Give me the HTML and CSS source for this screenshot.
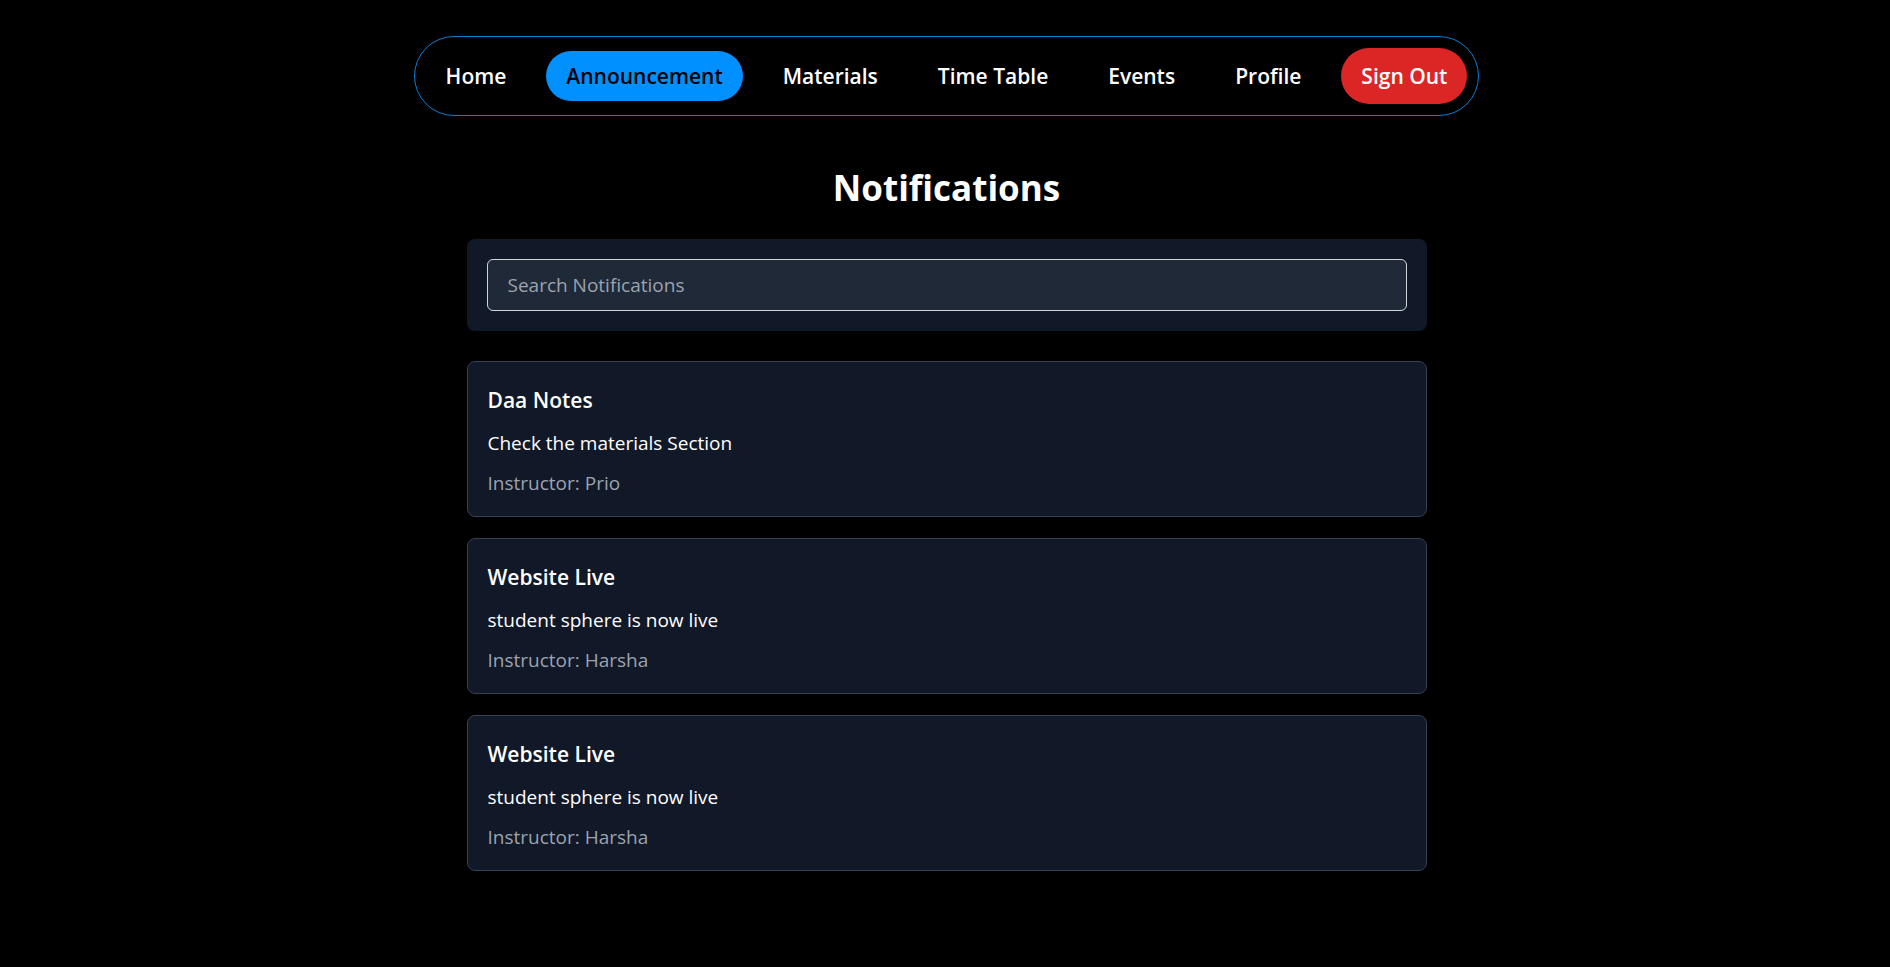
FILE: index.html
```html
<!DOCTYPE html>
<html lang="en">
<head>
<meta charset="utf-8">
<title>Notifications</title>
<link rel="stylesheet" href="styles.css">
</head>
<body>
<div class="page">
  <nav class="nav">
    <a class="nav-item">Home</a>
    <a class="nav-item active">Announcement</a>
    <a class="nav-item">Materials</a>
    <a class="nav-item">Time Table</a>
    <a class="nav-item">Events</a>
    <a class="nav-item">Profile</a>
    <a class="nav-item signout">Sign Out</a>
  </nav>
  <main class="content">
    <h1 class="title">Notifications</h1>
    <div class="search-box">
      <input class="search-input" type="text" placeholder="Search Notifications">
    </div>
    <div class="card">
      <h3 class="card-title">Daa Notes</h3>
      <p class="card-text">Check the materials Section</p>
      <p class="card-meta">Instructor: Prio</p>
    </div>
    <div class="card">
      <h3 class="card-title">Website Live</h3>
      <p class="card-text">student sphere is now live</p>
      <p class="card-meta">Instructor: Harsha</p>
    </div>
    <div class="card">
      <h3 class="card-title">Website Live</h3>
      <p class="card-text">student sphere is now live</p>
      <p class="card-meta">Instructor: Harsha</p>
    </div>
  </main>
</div>
</body>
</html>
```
FILE: styles.css
```css
* { box-sizing: border-box; }
html, body {
  margin: 0;
  padding: 0;
  background: #000;
  color: #fff;
  font-family: "Open Sans", "Noto Sans", sans-serif;
}
.page {
  display: flex;
  flex-direction: column;
  align-items: center;
  padding-top: 36px;
  padding-left: 3px;
}
.nav {
  display: flex;
  align-items: center;
  gap: 20px;
  padding: 11px 11px;
  border: 1px solid #0a7fd6;
  border-radius: 9999px;
}
.nav-item {
  display: block;
  padding: 11px 20px;
  font-size: 21px;
  line-height: 28px;
  font-weight: 600;
  color: #fff;
  border-radius: 9999px;
  text-decoration: none;
  white-space: nowrap;
}
.nav-item.active {
  background: #0090ff;
  color: #000;
}
.nav-item.signout {
  background: #dc2626;
  padding: 14px 20px;
}
.content {
  width: 960px;
  display: flex;
  flex-direction: column;
}
.title {
  margin: 50px 0 29px;
  text-align: center;
  font-size: 35px;
  line-height: 44px;
  font-weight: 700;
}
.search-box {
  background: #111827;
  border-radius: 8px;
  padding: 20px;
  margin-bottom: 30px;
}
.search-input {
  display: block;
  width: 100%;
  height: 52px;
  padding: 0 20px;
  background: #1f2937;
  border: 1px solid #d1d5db;
  border-radius: 6px;
  color: #fff;
  font-family: inherit;
  font-size: 19px;
  outline: none;
}
.search-input::placeholder { color: #9ca3af; }
.card {
  background: #111827;
  border: 1px solid #374151;
  border-radius: 8px;
  padding: 24px 20px 0;
  margin-bottom: 21px;
  height: 156px;
}
.card-title {
  margin: 0 0 15px;
  font-size: 21px;
  line-height: 28px;
  font-weight: 600;
}
.card-text {
  margin: 0 0 12px;
  font-size: 19px;
  line-height: 28px;
}
.card-meta {
  margin: 0;
  font-size: 19px;
  line-height: 28px;
  color: #9ca3af;
}
```
